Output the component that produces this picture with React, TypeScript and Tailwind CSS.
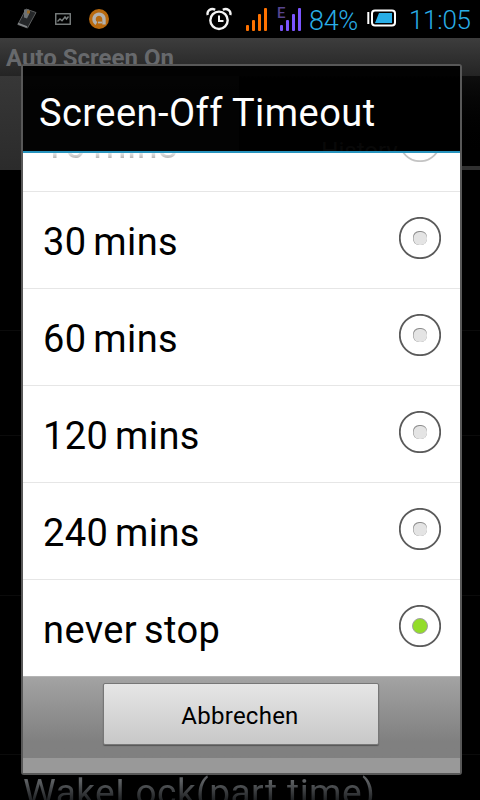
import { useState } from "react";

const OPTIONS = ["30 mins", "60 mins", "120 mins", "240 mins", "never stop"];

const AlarmIcon = () => (
  <svg width="26" height="24" viewBox="0 0 26 24" fill="none" stroke="#f4f4f4">
    <circle cx="13" cy="13.3" r="8.7" strokeWidth="2.4" />
    <path d="M13 8.5V14h4.5" strokeWidth="2" />
    <path d="M1.8 8C.4 3.8 5 .6 9.2 2.7M24.2 8C25.6 3.8 21 .6 16.8 2.7" strokeWidth="2.4" />
  </svg>
);

const BatteryIcon = () => (
  <svg width="30" height="18" viewBox="0 0 30 18" fill="none">
    <path d="M1.3 3v12" stroke="#fff" strokeWidth="2" />
    <rect x="5" y="1.5" width="23" height="15" rx="3" stroke="#fff" strokeWidth="2" />
    <path d="M12 4h13v10H8z" fill="#29aee6" />
  </svg>
);

const PhoneIcon = () => (
  <svg width="20" height="21" viewBox="0 0 20 21">
    <path d="M9 1 19 4.5 10.5 20 .8 16.5z" fill="#252729" stroke="#5b5d5e" strokeWidth="1" />
    <path d="M1 15.5 10 19" stroke="#85888a" strokeWidth="1.5" />
    <path d="M7 1.5h5v5l-2 4-3-1z" fill="#6e7274" />
    <path d="M10 2.5h3v3h-3z" fill="#9a6a27" />
  </svg>
);

const PictureIcon = () => (
  <svg width="16" height="12" viewBox="0 0 16 12" fill="none" stroke="#7b8080">
    <rect x=".75" y=".75" width="14.5" height="10.5" strokeWidth="1.4" />
    <path d="M2.5 8.5 5 6l2 1.8L10 4l1.5 2 2-2.5" strokeWidth="1.4" />
  </svg>
);

const AvastIcon = () => (
  <svg width="20" height="20" viewBox="0 0 20 20" fill="none">
    <circle cx="10" cy="10" r="10" fill="#b8690e" />
    <path d="M7.5 14.5A5 5 0 1 1 15 10v5.5" stroke="#b3b1ae" strokeWidth="3.4" />
    <path d="M9 13.5h4" stroke="#b3b1ae" strokeWidth="1.8" />
  </svg>
);

const SignalBars = ({ color }: { color: string }) => (
  <svg width="22" height="23" viewBox="0 0 22 23" fill={color}>
    <rect x="0" y="17" width="3" height="6" rx="1" />
    <rect x="6" y="12" width="3" height="11" rx="1" />
    <rect x="12" y="6" width="3" height="17" rx="1" />
    <rect x="18" y="0" width="3" height="23" rx="1" />
  </svg>
);

const StatusBar = () => (
  <header className="flex h-[38px] shrink-0 items-start bg-black text-[#29aee6]">
    <div className="flex items-center pl-[17px] pt-2">
      <PhoneIcon />
      <span className="ml-[18px]">
        <PictureIcon />
      </span>
      <span className="ml-[18px]">
        <AvastIcon />
      </span>
    </div>
    <div className="ml-[97px] mt-[7px]">
      <AlarmIcon />
    </div>
    <div className="ml-[14px] mt-2">
      <SignalBars color="#ff7200" />
    </div>
    <div className="relative ml-[12px] mt-2">
      <SignalBars color="#7b55ff" />
      <span className="absolute -left-[3px] -top-[2px] text-[15px] leading-none font-medium text-[#57458f]">
        E
      </span>
    </div>
    <span className="ml-[7px] mt-[8px] w-[50px] whitespace-nowrap text-[27px] leading-[27px] font-light tracking-[-0.3px]">
      84%
    </span>
    <div className="ml-[8px] mt-[9px]">
      <BatteryIcon />
    </div>
    <span className="ml-[12px] mt-[7px] whitespace-nowrap text-[26px] leading-[26px] font-light tracking-[-0.3px]">
      11:05
    </span>
  </header>
);

const Radio = ({ checked }: { checked: boolean }) => (
  <svg width="42" height="42" viewBox="0 0 42 42" fill="none" className="shrink-0">
    <circle cx="21" cy="21" r="20.2" stroke="#5a5a5a" strokeWidth="1.8" />
    {checked ? (
      <circle cx="21" cy="21" r="7.5" fill="#93dc2a" stroke="#a2a2a2" />
    ) : (
      <>
        <rect x="14" y="14" width="14" height="14" rx="6" fill="#8c8c8c" />
        <rect x="14.5" y="15" width="13.5" height="13" rx="6" fill="#e4e4e4" />
      </>
    )}
  </svg>
);

const Backdrop = () => (
  <div className="flex flex-1 flex-col overflow-hidden">
    <div className="h-[38px] shrink-0 bg-gradient-to-b from-[#3d3d3d] to-[#242424] pl-[6px] pt-[5px] text-[24px] leading-[30px] font-bold text-[#67696c]">
      Auto Screen On
    </div>
    <div className="flex h-[94px] shrink-0">
      <div className="w-[239px] bg-gradient-to-b from-[#373737] to-[#2b2b2b]" />
      <div className="flex flex-1 items-end justify-center border-b-4 border-[#303030] bg-gradient-to-b from-[#0e0e0e] to-black pb-px text-[24px] leading-[28px] text-[#777]">
        History
      </div>
    </div>
    <div className="h-[161px] shrink-0 border-b border-[#0b0b0b]" />
    <div className="h-[105px] shrink-0 border-b border-[#0b0b0b]" />
    <div className="h-[160px] shrink-0 border-b border-[#0b0b0b]" />
    <div className="h-[159px] shrink-0 border-b border-[#0b0b0b]" />
    <div className="shrink-0 whitespace-nowrap bg-gradient-to-b from-[#5d6063] from-45% to-[#1c1e20] to-80% bg-clip-text pl-[23px] pt-[18px] text-[37px] leading-[40px] tracking-[0.45px] text-transparent">
      WakeLock(part time)
    </div>
  </div>
);

export default function App() {
  const [selected, setSelected] = useState("never stop");

  return (
    <div className="relative flex h-[800px] w-[480px] flex-col overflow-hidden bg-black font-['Roboto',sans-serif]">
      <StatusBar />
      <Backdrop />

      <div className="absolute left-[21px] top-[64px] flex h-[711px] w-[441px] flex-col rounded-[3px] border-2 border-[#585858]">
        <h1 className="h-[87px] shrink-0 whitespace-nowrap border-b-2 border-[#2793bd] bg-black/93 pl-[16px] pt-[25px] text-[38px] leading-[44px] tracking-[0.45px] text-white">
          Screen-Off Timeout
        </h1>

        <div className="flex h-[523px] shrink-0 flex-col justify-end overflow-hidden bg-white text-[38px] tracking-[0.4px] text-black">
          <div className="flex h-[97px] shrink-0 items-center justify-between border-b border-[#e6e6e6] pl-[20px] pr-[19px]">
            <span className="bg-gradient-to-b from-white from-62% to-[#aaa] to-76% bg-clip-text pt-[4px] text-transparent [word-spacing:-3px]">
              10 mins
            </span>
            <span className="-mt-[4px] opacity-35">
              <Radio checked={false} />
            </span>
          </div>
          {OPTIONS.map((option) => (
            <button
              key={option}
              onClick={() => setSelected(option)}
              className="flex h-[97px] shrink-0 items-center justify-between border-b border-[#e6e6e6] pl-[20px] pr-[19px] last:h-[96px] last:border-b-0"
            >
              <span className="pt-[4px] [word-spacing:-3px]">{option}</span>
              <span className="-mt-[4px]">
                <Radio checked={option === selected} />
              </span>
            </button>
          ))}
        </div>

        <div className="flex-1 bg-[#999]">
          <div className="flex h-[82px] justify-center border-t border-[#b4b4b4] bg-gradient-to-b from-[#a3a3a3] to-[#808080] to-80% pt-[6px] pr-[2px]">
            <button className="h-[62px] w-[276px] rounded-[2px] border border-[#777] bg-gradient-to-b from-[#e6e6e6] to-[#c8c8c8] pt-[3px] pr-[1px] text-[24px] tracking-[0.25px] text-black shadow-[0_1px_1px_#555]">
              Abbrechen
            </button>
          </div>
        </div>
      </div>
    </div>
  );
}
